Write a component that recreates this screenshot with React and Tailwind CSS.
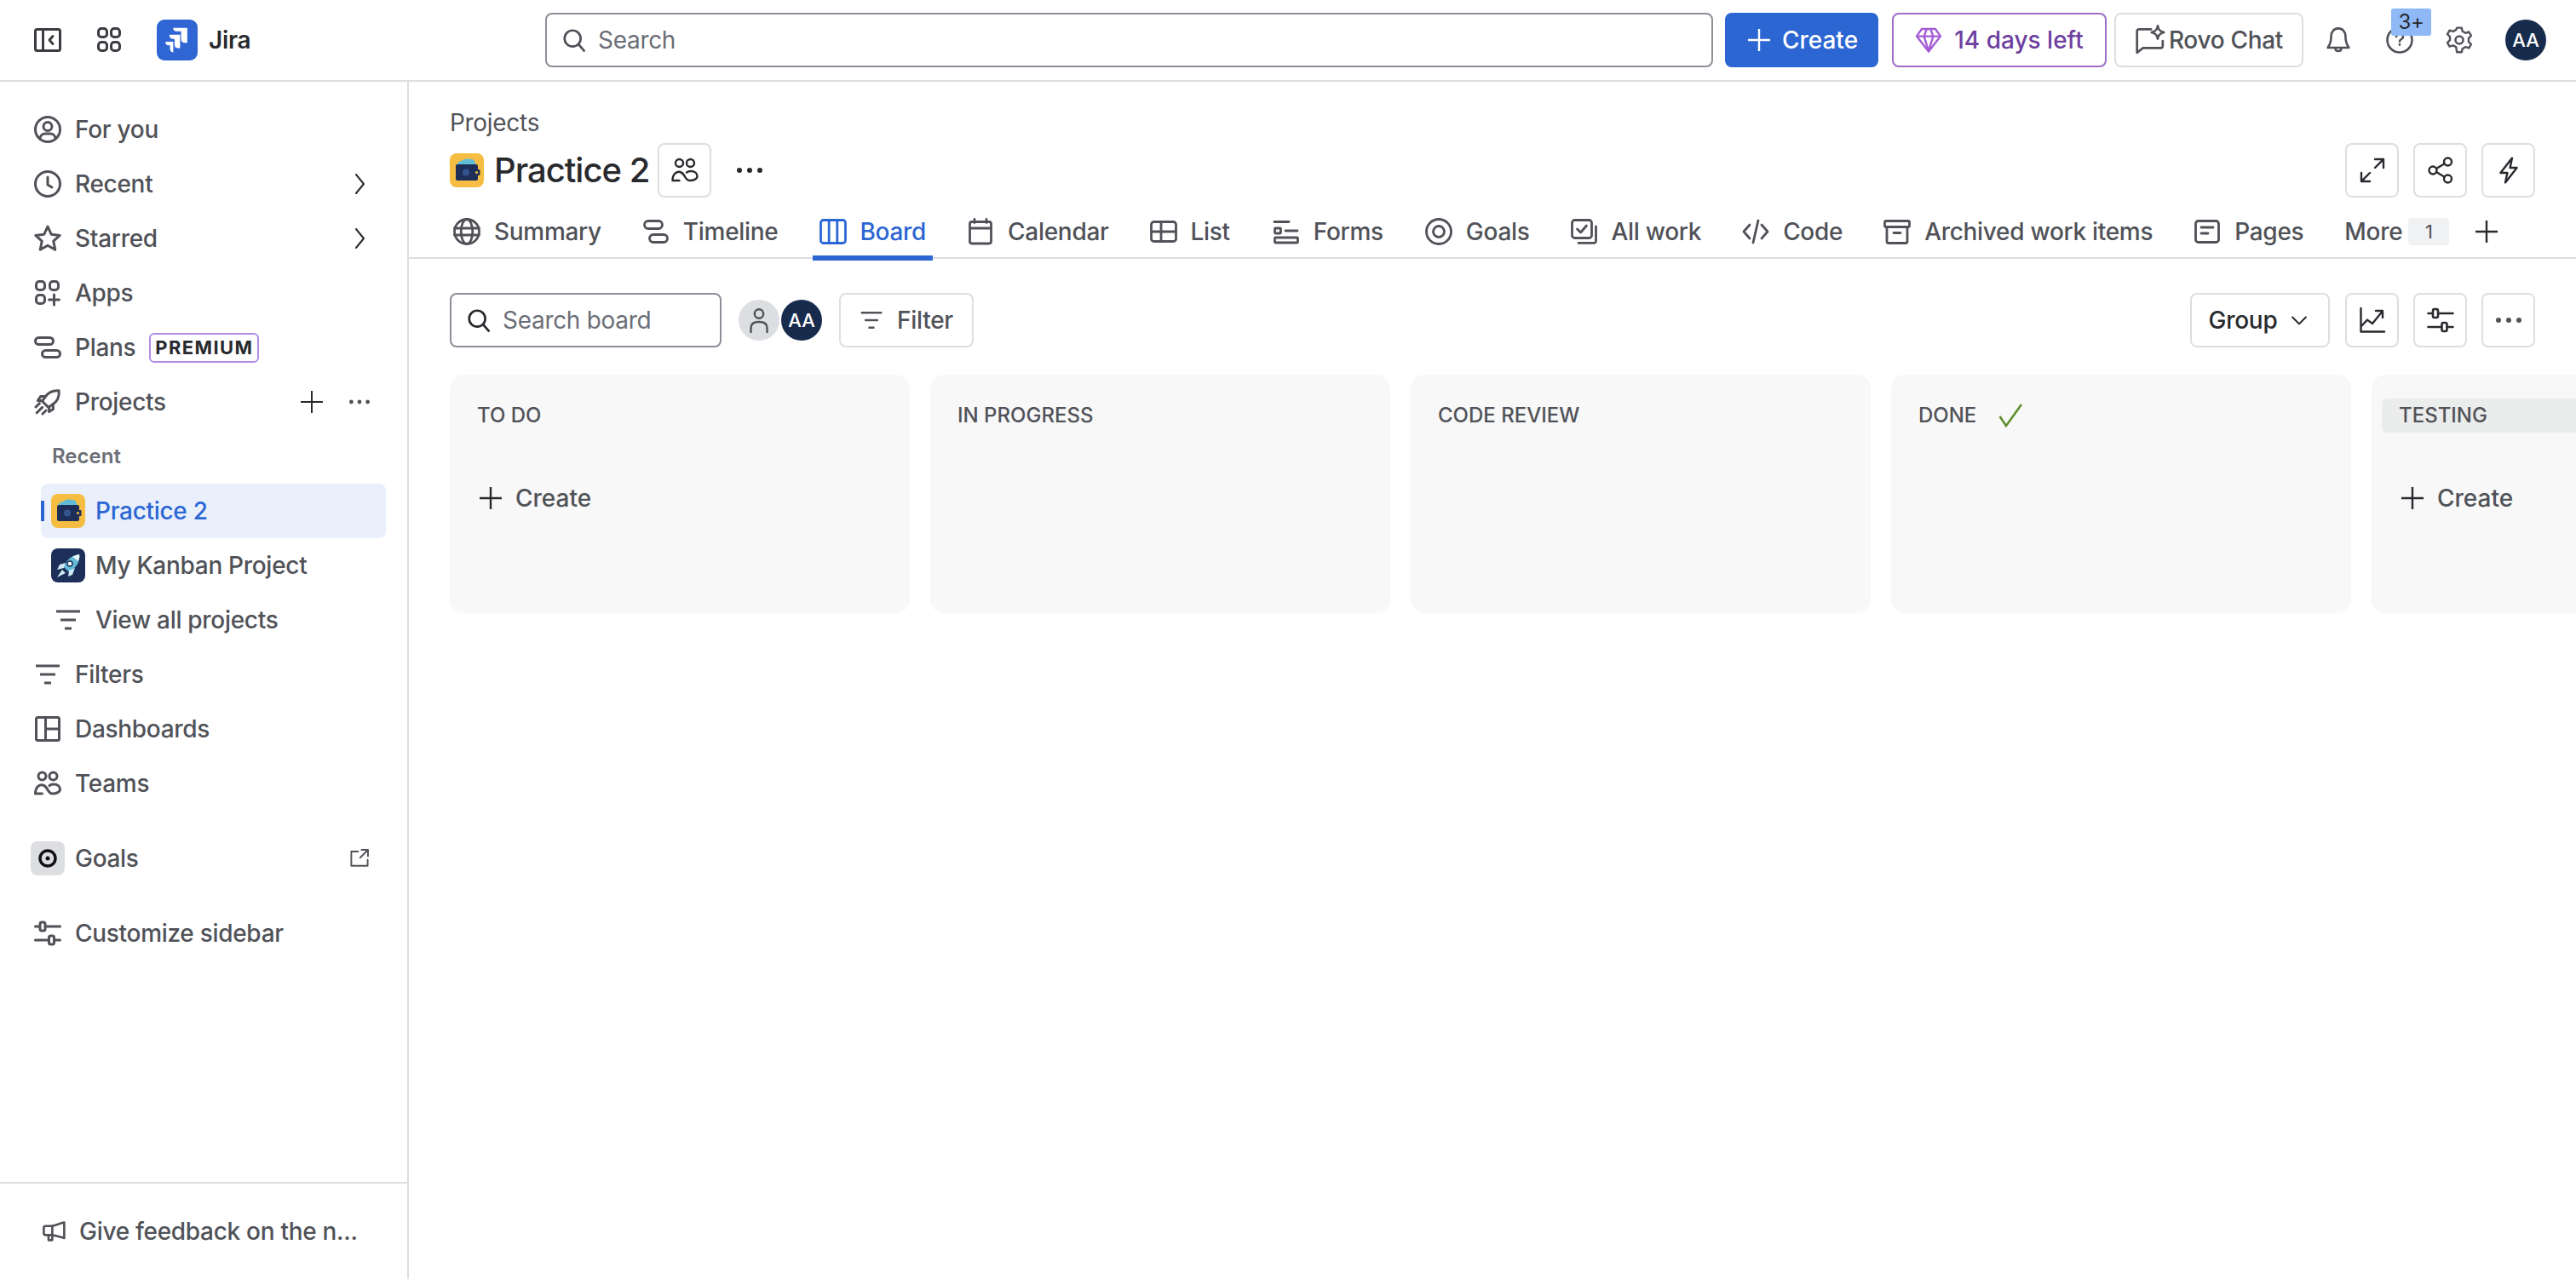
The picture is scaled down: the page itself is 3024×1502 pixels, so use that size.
import React from "react"

// all glyphs share Atlassian's 16 unit grid
const Svg = ({ className = "w-8 h-8", sw = 1.5, children }) => (
  <svg viewBox="0 0 16 16" fill="none" stroke="currentColor" strokeWidth={sw} strokeLinecap="round" strokeLinejoin="round" className={`shrink-0 ${className}`}>
    {children}
  </svg>
)

const icons = {
  panel: <><rect x="0.75" y="1.75" width="14.5" height="12.5" rx="1" /><path d="M5.25 2v12" /><path d="M11 5.8 9 8l2 2.2" /></>,
  apps: <><rect x="1.75" y="1.25" width="5" height="5" rx="1.8" /><rect x="9.25" y="1.25" width="5" height="5" rx="1.8" /><rect x="1.75" y="9.25" width="5" height="5" rx="1.8" /><rect x="9.25" y="9.25" width="5" height="5" rx="1.8" /></>,
  search: <><circle cx="7" cy="7" r="5.25" /><path d="m11 11 3.5 4" /></>,
  plus: <path d="M8 1.5v13M1.5 8h13" strokeLinecap="butt" />,
  user: <><circle cx="8" cy="8" r="7.25" /><circle cx="8" cy="6.25" r="2.5" /><path d="M3.5 13.5c0-2 1.5-3 3-3h3c1.5 0 3 1 3 3" /></>,
  clock: <><circle cx="8" cy="8" r="7.25" /><path d="M8 4v4.5l2.5 1.5" /></>,
  star: <path d="m8 1 2.1 4.6 5 .6-3.7 3.4 1 5L8 12.1l-4.4 2.5 1-5L.9 6.2l5-.6z" />,
  chevR: <path d="m6 2.5 4.5 5.5L6 13.5" />,
  appsPlus: <><rect x="1.25" y="1.25" width="5" height="5" rx="1.8" /><rect x="9.25" y="1.25" width="5" height="5" rx="1.8" /><rect x="1.25" y="9.25" width="5" height="5" rx="1.8" /><path d="M11.75 9v6M8.75 12h6" /></>,
  plans: <><rect x="0.75" y="2.25" width="10.5" height="4" rx="2" /><rect x="4.75" y="9.75" width="10.5" height="4" rx="2" /></>,
  rocket: <><path d="M14.6 1.4c-3.8-.3-6.3 1-8 3.6L4.8 7.6l3.6 3.6 2.6-1.8c2.6-1.7 3.9-4.2 3.6-8z" /><path d="M5 7.2H2.2l1.6-2.4h3M8.8 11v2.8l2.4-1.6v-3M1 11l2.2-2.2M1.6 14.4l3.2-3.2M5 15l2-2" /></>,
  lines: <path d="M1 3h14M3.5 8h9M6 13h4" strokeLinecap="butt" />,
  board2: <><rect x="1.25" y="1.25" width="13.5" height="13.5" rx="1" /><path d="M6.75 1.5v13M6.75 8h8" /></>,
  teams: <><circle cx="4.75" cy="3.75" r="2.25" /><circle cx="11.25" cy="3.75" r="2.25" /><path d="M.75 14c0-4 2.5-5.5 4.5-5 3 .7 2.5 5 5.5 5 2.5 0 4.5-1 4.5-2.5S14 8.5 11.5 8.5c-1 0-2 .3-2.5.8M.75 14h4" /></>,
  external: <><path d="M7 3H2v10.5h12V9" /><path d="M9.5 1.75h4.75V6.5M14 2 8.5 7.5" /></>,
  sliders: <><path d="M0.75 4h2.5M7 4h8.25M0.75 12h7.5M12 12h3.25" /><rect x="3.5" y="1.5" width="3" height="5" rx="1" /><rect x="8.75" y="9.5" width="3" height="5" rx="1" /></>,
  megaphone: <><path d="M14.5 2v10.5c-3-.6-5.5-1.6-8-2H2A1.2 1.2 0 0 1 .8 9.3V5.6A1.2 1.2 0 0 1 2 4.4h4.5c2.5-.5 5-1.7 8-2.4z" /><path d="M4 10.5v3.4h2.5v-3.2M6.5 4.5v6" /></>,
  expand: <path d="M9.5 1.5h5v5M14.2 1.8 9.5 6.5M6.5 14.5h-5v-5M1.8 14.2l4.7-4.7" />,
  share: <><circle cx="12.25" cy="3" r="2.25" /><circle cx="3.5" cy="8" r="2.25" /><circle cx="12.25" cy="13" r="2.25" /><path d="m5.5 7 4.8-2.9M5.5 9l4.8 2.9" /></>,
  bolt: <path d="M10 .8 3.200 9.500H7.200L6 15.200 12.800 6.500H8.800z" />,
  globe: <><circle cx="8" cy="8" r="7.25" /><path d="M.75 6h14.5M.75 10h14.5" /><ellipse cx="8" cy="8" rx="3.4" ry="7.25" /></>,
  timeline: <><rect x="1.25" y="1.75" width="10.5" height="4.5" rx="2.2" /><rect x="4.25" y="9.75" width="10.5" height="4.5" rx="2.2" /></>,
  board: <><rect x="0.75" y="1.25" width="14.5" height="13.5" rx="1.5" /><path d="M5.6 1.5v13M10.4 1.5v13" /></>,
  calendar: <><rect x="1.75" y="2.25" width="12.5" height="12.75" rx="1.2" /><path d="M2 6h12M4.5 .75v2M11.5 .75v2" /></>,
  list: <><rect x="0.75" y="2.25" width="14.5" height="11.5" rx="1.5" /><path d="M1 8h14M6.5 2.5v11" /></>,
  forms: <><path d="M1 2.25h8.5" /><rect x="1.25" y="6" width="3.5" height="3" rx=".5" /><path d="M7.5 7.5h7" /><rect x="1.25" y="11.5" width="13.5" height="3" rx=".5" /></>,
  target: <><circle cx="8" cy="8" r="7.25" /><circle cx="8" cy="8" r="3.25" /></>,
  allwork: <><rect x="0.75" y="1.25" width="11.5" height="10.5" rx="1.5" /><path d="m3.8 6.5 2 2 3.4-4M14.75 5v8.5a1.2 1.2 0 0 1-1.2 1.2H4.5" /></>,
  code: <path d="M4.5 4 1 8l3.5 4M11.5 4 15 8l-3.5 4M9.500 1.500l-3 13" />,
  archive: <><rect x="0.75" y="1.75" width="14.5" height="3.5" rx=".8" /><path d="M2 5.5v8.25c0 .6.4 1 1 1h10c.6 0 1-.4 1-1V5.5M6 8.750h4" /></>,
  pages: <><rect x="1.25" y="1.75" width="13.5" height="12.5" rx="1.5" /><path d="M4.500 5.500h7M4.500 9h4" /></>,
  chevD: <path d="m3.500 6 4.500 4.500L12.500 6" />,
  chart: <><path d="M1.250 1v13.750H15" /><path d="m1.500 11.500 3.500-3.700 3 2.200 5.500-6.800M10 2.500h4v4" /></>,
  bell: <><path d="M8 1.200c-2.600 0-4.200 2-4.200 4.600 0 3.500-.7 5-2 6.700h12.400c-1.300-1.700-2-3.200-2-6.700C12.200 3.200 10.600 1.200 8 1.200z" /><path d="M6.300 13c0 2 3.400 2 3.400 0" /></>,
  help: <><circle cx="8" cy="8" r="7.250" /><path d="M8 10.500v.3M6 6c.4-1.900 4-1.900 4 .2 0 1.300-2 1.300-2 2.600" /></>,
  gear: <><path d="m6.500 1h3l.5 2.200 1.900 1.100 2.200-.7 1.400 2.400-1.600 1.600v2.200l1.600 1.600-1.400 2.400-2.200-.7-1.900 1.100-.5 2.200h-3L6 13.200l-1.900-1.100-2.200.7L.5 10.400l1.600-1.600V6.600L.5 5l1.400-2.400 2.200.7L6 2.200z" transform="matrix(.93 0 0 .93 .56 -.1)" /><circle cx="8" cy="8" r="2.250" /></>,
  person: <><circle cx="8" cy="4.250" r="2.600" /><path d="M3.250 15v-2.500c0-2.200 1.800-3.500 4.750-3.500s4.750 1.300 4.750 3.500V15" /></>,
  rovo: <><path d="M8.500 2.400H2.200c-.6 0-1 .4-1 1v11.200l3-2.400h9.300c.7 0 1.100-.5 1.100-1.100V8.500" /><path d="M12 .6c.3 2 1 2.900 3.200 3.400-2.200.5-2.900 1.400-3.200 3.400-.3-2-1-2.900-3.200-3.400C11 3.500 11.700 2.600 12 .6z" /></>,
  diamond: <><path d="M4 1.500h8l3 4.300L8 14.800 1 5.800z" /><path d="M1.200 5.800h13.600M5.300 5.800 8 14.500l2.700-8.700M5.300 5.800 6.800 1.800M10.700 5.800 9.200 1.800" /></>,
}

const Icon = ({ name, className, sw }) => <Svg className={className} sw={sw}>{icons[name]}</Svg>

const Dots = ({ className = "w-8 h-8" }) => (
  <svg viewBox="0 0 16 16" className={`shrink-0 ${className}`} fill="currentColor">
    <circle cx="3.200" cy="8" r="1.200" />
    <circle cx="8" cy="8" r="1.200" />
    <circle cx="12.800" cy="8" r="1.200" />
  </svg>
)

const JiraLogo = () => (
  <div className="w-12 h-12 rounded-[9px] bg-[#2F66D4] flex items-center justify-center shrink-0">
    <svg viewBox="0 0 24 24" className="w-[46px] h-[46px]" fill="#fff">
      <path d="M9.500 4.500h8.700v9.200h-1.600c-1.400 0-2.200-.9-2.200-2.200V6.700h-2.600c-1.400 0-2.300-.8-2.300-2.200z" />
      <path d="M7.200 8.800h6.600v8.200h-1.400c-1.300 0-2-.8-2-2v-3.700H9.200c-1.300 0-2-.9-2-2.500z" />
      <path d="M4.800 13h4.800v6.500c-1.300 0-2-.8-2-2v-2.300H6.800c-1.300 0-2-.7-2-2.200z" />
    </svg>
  </div>
)

const WalletIcon = () => (
  <svg viewBox="0 0 40 40" className="w-10 h-10 shrink-0 rounded-lg">
    <rect width="40" height="40" fill="#F5BD41" />
    <path d="M8 14c1-3 3-5 6-5 2-2 6-3 9-2 3-1 6 1 7 4l1 3z" fill="#62BCD8" />
    <rect x="7" y="13" width="26" height="19" rx="2" fill="#1D2F58" />
    <rect x="28" y="19" width="7.500" height="7" rx="1" fill="#1D2F58" />
    <circle cx="31.500" cy="22.500" r="1.500" fill="#F5BD41" />
    <circle cx="19" cy="22.500" r="4" fill="#35558F" />
  </svg>
)

const RocketIcon = () => (
  <svg viewBox="0 0 40 40" className="w-10 h-10 shrink-0 rounded-lg">
    <rect width="40" height="40" fill="#1D2F58" />
    <path d="M33 7c-7 1-12 4-15 9l-3 6 5 5 6-3c5-4 8-10 7-17z" fill="#62BCD8" />
    <path d="M33 7c-3 .5-6 1.500-8 3 2 1 5 3 6 5 2-2 3-5 2-8z" fill="#EAF5F9" />
    <path d="M17 17l-7 2-3 6 8-2zM21 26l-1 7 5-2 3-8zM13 25l-6 9 10-5z" fill="#CDEAF2" />
    <circle cx="22" cy="18" r="3" fill="#fff" stroke="#1D2F58" strokeWidth="1.500" />
  </svg>
)

const navTop = [
  { icon: "user", label: "For you" },
  { icon: "clock", label: "Recent", chevron: true },
  { icon: "star", label: "Starred", chevron: true },
  { icon: "appsPlus", label: "Apps" },
]

const NavRow = ({ icon, label, children }) => (
  <div className="h-16 flex items-center gap-4 pl-10 pr-10 text-[#505258]">
    {icon && <Icon name={icon} />}
    <span>{label}</span>
    {children}
  </div>
)

const Sidebar = () => (
  <aside className="w-[480px] shrink-0 border-r-2 border-[#DDDEE1] flex flex-col pt-6 font-medium">
    {navTop.map((item) => (
      <NavRow key={item.label} icon={item.icon} label={item.label}>
        {item.chevron && <Icon name="chevR" sw={1} className="w-8 h-8 ml-auto text-[#292A2E]" />}
      </NavRow>
    ))}
    <NavRow icon="plans" label="Plans">
      <span className="h-[35px] w-[129px] rounded-md border-2 border-[#B48CE2] flex items-center justify-center text-[22px] leading-none font-bold tracking-[1.4px] text-[#292A2E]">PREMIUM</span>
    </NavRow>
    <NavRow icon="rocket" label="Projects">
      <Icon name="plus" sw={1} className="w-8 h-8 ml-auto text-[#292A2E]" />
      <Dots className="w-8 h-8 ml-2 text-[#505258]" />
    </NavRow>
    <div className="h-16 flex items-center pl-[61px] text-[24px] font-semibold tracking-normal text-[#6B6E76]">Recent</div>
    <div className="relative h-16 ml-12 mr-[25px] pl-3 flex items-center gap-3 rounded-lg bg-[#E9F0FC] text-[#2C66D3]">
      <span className="absolute left-0 top-5 h-6 w-1 bg-[#2C66D3]" />
      <WalletIcon />
      <span>Practice 2</span>
    </div>
    <div className="h-16 ml-12 pl-3 flex items-center gap-3 text-[#505258]">
      <RocketIcon />
      <span>My Kanban Project</span>
    </div>
    <div className="h-16 ml-12 pl-[16px] flex items-center gap-[16px] text-[#505258]">
      <Icon name="lines" />
      <span>View all projects</span>
    </div>
    <NavRow icon="lines" label="Filters" />
    <NavRow icon="board2" label="Dashboards" />
    <NavRow icon="teams" label="Teams" />
    <div className="h-16 mt-6 pl-9 pr-10 flex items-center gap-3 text-[#505258]">
      <span className="w-10 h-10 rounded-lg bg-[#DDDEE1] flex items-center justify-center">
        <svg viewBox="0 0 24 24" className="w-6 h-6" fill="none" stroke="#111" strokeWidth="3.500">
          <circle cx="12" cy="12" r="9" />
          <circle cx="12" cy="12" r="2.500" fill="#111" stroke="none" />
        </svg>
      </span>
      <span>Goals</span>
      <Icon name="external" sw={1.2} className="w-8 h-8 ml-auto scale-[0.8]" />
    </div>
    <div className="mt-6">
      <NavRow icon="sliders" label="Customize sidebar" />
    </div>
    <div className="mt-auto h-[114px] border-t-2 border-[#DDDEE1] pl-[50px] flex items-center gap-[15px] text-[#505258]">
      <Icon name="megaphone" className="w-7 h-7" />
      <span>Give feedback on the n...</span>
    </div>
  </aside>
)

const OutlineBtn = ({ children, className = "w-[63px]" }) => (
  <button className={`h-16 rounded-lg border-2 border-[#DDDEE1] bg-white flex items-center justify-center text-[#292A2E] ${className}`}>
    {children}
  </button>
)

const Topbar = () => (
  <header className="h-24 shrink-0 border-b-2 border-[#DDDEE1] flex items-center pl-10 font-medium">
    <Icon name="panel" className="w-8 h-8 text-[#3B3D42]" />
    <Icon name="apps" className="w-8 h-8 ml-[40px] text-[#3B3D42]" />
    <div className="ml-[40px] flex items-center gap-[13px] w-[456px]">
      <JiraLogo />
      <span className="font-semibold text-[#292A2E]">Jira</span>
    </div>
    <div className="w-[1371px] h-16 rounded-lg border-2 border-[#8C8F97] flex items-center pl-4 gap-[12px] text-[#6B6E76] font-normal">
      <Icon name="search" className="w-8 h-8 text-[#505258] scale-90" />
      <span>Search</span>
    </div>
    <button className="ml-[14px] w-[180px] h-16 rounded-lg bg-[#2C66D3] text-white tracking-normal flex items-center justify-center gap-[11px]">
      <Icon name="plus" sw={1.2} className="w-8 h-8" />
      Create
    </button>
    <button className="ml-[16px] w-[252px] h-16 rounded-lg border-2 border-[#A06CC6] text-[#6E3F9F] tracking-normal flex items-center justify-center gap-[14px]">
      <Icon name="diamond" className="w-8 h-8 text-[#A45CD6]" sw={1.2} />
      14 days left
    </button>
    <button className="ml-[9px] w-[222px] h-16 rounded-lg border-2 border-[#DDDEE1] text-[#505258] flex items-center justify-center gap-[4px]">
      <Icon name="rovo" className="w-9 h-9" sw={1.2} />
      Rovo Chat
    </button>
    <Icon name="bell" className="w-8 h-8 ml-[25px] text-[#505258]" sw={1.3} />
    <div className="relative ml-[40px]">
      <Icon name="help" className="w-8 h-8 text-[#505258]" sw={1.3} />
      <span className="absolute -top-[21px] left-[6px] w-[47px] h-8 rounded-[3px] bg-[#8FB8F6] flex items-center justify-center text-[24px] font-normal text-[#292A2E]">3+</span>
    </div>
    <Icon name="gear" className="w-8 h-8 ml-[38px] text-[#505258]" sw={1.3} />
    <span className="ml-[38px] w-12 h-12 rounded-full bg-[#172B4D] text-white text-[22px] tracking-normal flex items-center justify-center">AA</span>
  </header>
)

const tabs = [
  { icon: "globe", label: "Summary" },
  { icon: "timeline", label: "Timeline" },
  { icon: "board", label: "Board", active: true },
  { icon: "calendar", label: "Calendar" },
  { icon: "list", label: "List" },
  { icon: "forms", label: "Forms", wide: true },
  { icon: "target", label: "Goals" },
  { icon: "allwork", label: "All work" },
  { icon: "code", label: "Code" },
  { icon: "archive", label: "Archived work items" },
  { icon: "pages", label: "Pages" },
]

const Tabs = () => (
  <div className="h-16 mt-2 border-b-2 border-[#DDDEE1] flex gap-8 pl-[44px] font-medium">
    {tabs.map((t) => (
      <div
        key={t.label}
        className={`relative h-16 px-2 flex items-center gap-4 ${t.wide ? "pl-[10px] pr-[9px]" : ""} ${t.active ? "text-[#2C66D3]" : "text-[#505258]"}`}
      >
        <Icon name={t.icon} className="w-8 h-8" sw={1.4} />
        <span>{t.label}</span>
        {t.active && <span className="absolute left-0 right-0 -bottom-[2px] h-[6px] bg-[#2C66D3]" />}
      </div>
    ))}
    <div className="h-16 flex items-center gap-[7px] text-[#505258]">
      <span className="ml-2">More</span>
      <span className="h-8 w-12 rounded bg-[#F0F1F2] flex items-center justify-center text-[22px] font-normal">1</span>
    </div>
    <div className="h-16 -ml-[4px] flex items-center text-[#292A2E]">
      <Icon name="plus" sw={1.2} className="w-8 h-8" />
    </div>
  </div>
)

const Column = ({ title, check, create, hover }) => (
  <div className="w-[540px] h-[280px] shrink-0 rounded-2xl bg-[#F8F8F8] flex flex-col pt-[28px] px-3">
    <div className={`h-10 pl-[20px] flex items-center gap-6 rounded-md text-[24px] font-medium tracking-normal text-[#505258] ${hover ? "bg-[#EBECEC]" : ""}`}>
      {title}
      {check && (
        <svg viewBox="0 0 16 16" fill="none" stroke="#5E8E2B" strokeWidth="1.300" className="w-8 h-8">
          <path d="M1.800 8.500 5.500 14 14.500 1.500" />
        </svg>
      )}
    </div>
    <div className="mt-[57px] h-10 pl-[20px] flex items-center gap-[13px] font-medium tracking-normal text-[#505258]">
      {create && <Icon name="plus" sw={1.2} className="w-8 h-8 text-[#292A2E]" />}
      {create && "Create"}
    </div>
  </div>
)

const Board = () => (
  <div className="flex gap-6 mt-8 pl-12">
    <Column title="TO DO" create />
    <Column title="IN PROGRESS" />
    <Column title="CODE REVIEW" />
    <Column title="DONE" check />
    <Column title="TESTING" create hover />
  </div>
)

const Toolbar = () => (
  <div className="h-16 mt-10 px-12 flex items-center">
    <div className="w-[319px] h-16 rounded-lg border-2 border-[#8C8F97] flex items-center pl-[16px] gap-[12px] text-[#6B6E76] font-normal">
      <Icon name="search" className="w-8 h-8 text-[#292A2E] scale-90" />
      <span>Search board</span>
    </div>
    <div className="ml-5 flex items-center">
      <span className="w-12 h-12 rounded-full bg-[#DDDEE1] flex items-center justify-center text-[#505258]">
        <Icon name="person" sw={1.2} className="w-8 h-8" />
      </span>
      <span className="w-12 h-12 ml-[2px] rounded-full bg-[#172B4D] text-white text-[22px] tracking-normal font-medium flex items-center justify-center">AA</span>
    </div>
    <OutlineBtn className="ml-5 w-[158px] gap-[16px] font-medium text-[#505258]">
      <Icon name="lines" className="w-7 h-7" />
      Filter
    </OutlineBtn>
    <OutlineBtn className="ml-auto w-[164px] gap-3 font-medium">
      Group
      <Icon name="chevD" sw={1.2} className="w-7 h-7" />
    </OutlineBtn>
    <OutlineBtn className="ml-[18px] w-[63px]"><Icon name="chart" sw={1.2} /></OutlineBtn>
    <OutlineBtn className="ml-[17px] w-[63px]"><Icon name="sliders" sw={1.3} /></OutlineBtn>
    <OutlineBtn className="ml-[17px] w-[63px]"><Dots className="w-10 h-10 text-[#505258]" /></OutlineBtn>
  </div>
)

export default function App() {
  return (
    <div className="w-[3024px] h-[1502px] overflow-hidden bg-white flex flex-col font-['Inter',sans-serif] text-[28px] tracking-[-0.3px] text-[#292A2E]">
      <Topbar />
      <div className="flex-1 flex min-h-0">
        <Sidebar />
        <main className="flex-1 min-w-0 flex flex-col overflow-hidden">
          <div className="pt-7 px-12">
            <div className="h-10 flex items-center text-[#505258]">Projects</div>
            <div className="h-16 mt-1 flex items-center">
              <WalletIcon />
              <h1 className="ml-3 text-[40px] font-medium tracking-[-1px] text-[#292A2E]">Practice 2</h1>
              <OutlineBtn className="ml-[10px] w-[63px]"><Icon name="teams" sw={1.2} /></OutlineBtn>
              <Dots className="w-10 h-10 ml-[25px] text-[#292A2E]" />
              <OutlineBtn className="ml-auto w-[63px]"><Icon name="expand" sw={1.2} /></OutlineBtn>
              <OutlineBtn className="ml-[17px] w-[63px]"><Icon name="share" sw={1.2} /></OutlineBtn>
              <OutlineBtn className="ml-[17px] w-[63px]"><Icon name="bolt" sw={1.2} /></OutlineBtn>
            </div>
          </div>
          <Tabs />
          <Toolbar />
          <Board />
        </main>
      </div>
    </div>
  )
}
